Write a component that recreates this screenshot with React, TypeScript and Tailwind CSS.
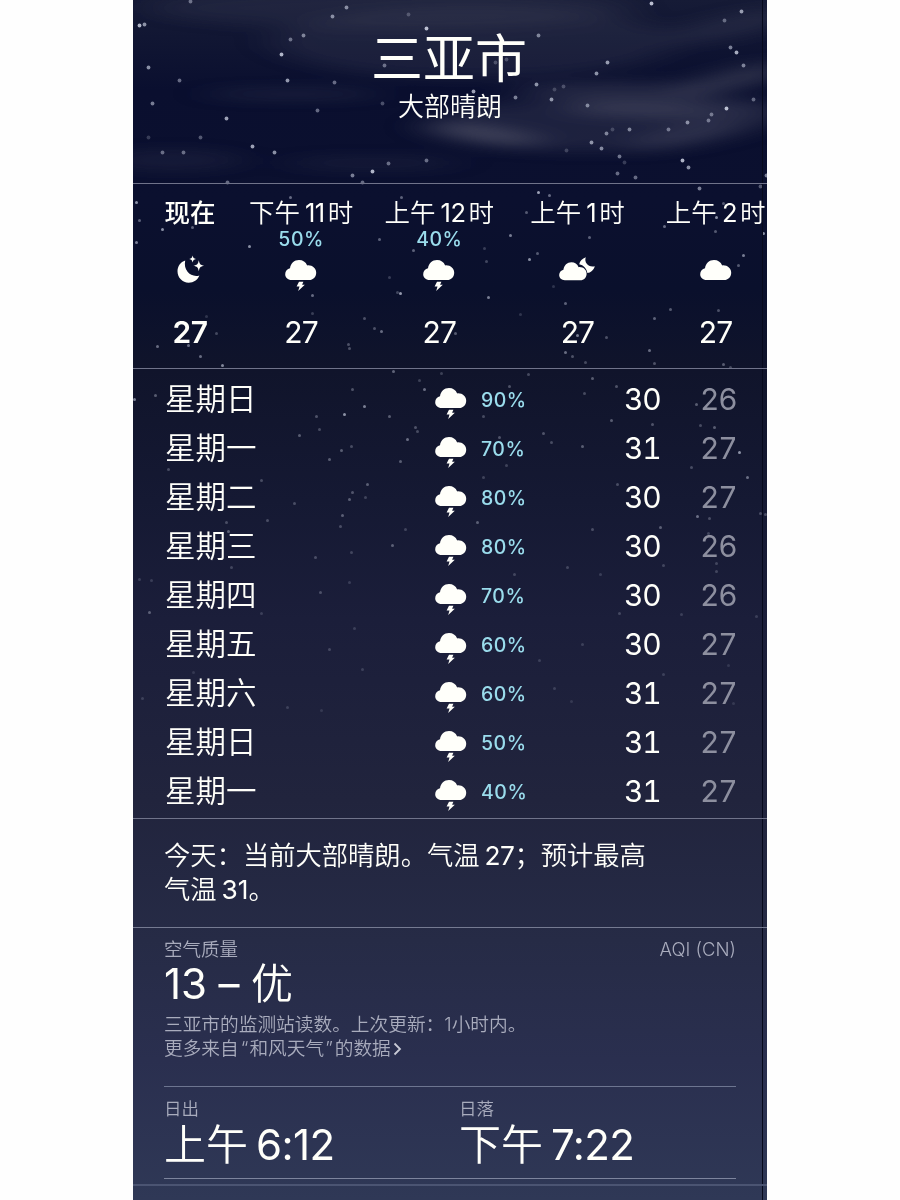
import type { ReactNode } from "react";

// x, y, opacity
const stars = [
  [57, 1, 0.5], [6, 25, 0.9], [11, 24, 0.7], [15, 67, 0.7], [46, 80, 0.5], [19, 103, 0.6], [15, 137, 0.25],
  [29, 152, 0.5], [50, 152, 0.5], [67, 137, 0.4], [93, 118, 0.8], [119, 146, 0.8], [141, 152, 0.7], [148, 54, 0.9],
  [154, 80, 0.75], [157, 39, 0.5], [170, 35, 0.6], [199, 16, 0.65], [213, 7, 0.65], [275, 14, 0.3], [293, 28, 0.95],
  [251, 65, 0.5], [201, 82, 0.5], [184, 110, 0.5], [249, 103, 0.35], [219, 175, 0.6], [229, 182, 0.5],
  [239, 171, 0.9], [255, 163, 0.5], [293, 160, 0.5], [94, 182, 0.5], [518, 3, 0.95], [608, 11, 0.75],
  [591, 20, 0.45], [597, 47, 0.6], [603, 52, 0.85], [610, 65, 0.6], [405, 35, 0.6], [474, 62, 0.75], [463, 73, 0.7],
  [403, 84, 0.7], [340, 91, 0.8], [382, 97, 0.6], [418, 99, 0.7], [421, 89, 0.25], [430, 86, 0.3], [454, 105, 0.6],
  [473, 133, 0.6], [479, 129, 0.25], [496, 129, 0.6], [458, 142, 0.7], [468, 148, 0.65], [486, 156, 0.55],
  [491, 162, 0.25], [484, 173, 0.5], [502, 177, 0.5], [433, 150, 0.25], [535, 129, 0.5], [554, 122, 0.65],
  [575, 120, 0.5], [578, 114, 0.5], [593, 108, 0.95], [620, 99, 0.45], [549, 160, 0.9], [555, 167, 0.7],
  [566, 188, 0.6], [627, 186, 0.4], [633, 175, 0.6], [362, 62, 0.3], [373, 59, 0.3],
  [3, 202, 0.7], [6, 220, 0.45], [29, 229, 0.7], [59, 227, 0.45], [3, 242, 0.6], [116, 246, 0.7], [157, 197, 0.5],
  [268, 197, 0.45], [246, 239, 0.45], [280, 250, 0.45], [256, 277, 0.25], [267, 293, 0.75], [264, 292, 0.3],
  [179, 295, 0.5], [179, 313, 0.25], [231, 318, 0.35], [241, 328, 0.35], [248, 331, 0.5], [215, 344, 0.35],
  [216, 348, 0.35], [24, 346, 0.5], [55, 345, 0.5], [67, 356, 0.5], [89, 365, 0.65], [83, 333, 0.3],
  [73, 316, 0.2], [260, 371, 0.45], [308, 373, 0.25], [405, 192, 0.8], [416, 195, 0.5], [393, 212, 0.4],
  [377, 235, 0.6], [351, 248, 0.25], [353, 261, 0.3], [396, 259, 0.7], [404, 253, 0.4], [456, 237, 0.45],
  [355, 297, 0.6], [420, 286, 0.2], [432, 303, 0.45], [387, 314, 0.2], [322, 333, 0.4], [444, 335, 0.6],
  [473, 337, 0.35], [432, 352, 0.5], [439, 356, 0.35], [452, 362, 0.3], [516, 350, 0.5], [521, 363, 0.35],
  [521, 318, 0.45], [537, 309, 0.4], [585, 310, 0.35], [590, 364, 0.4], [597, 367, 0.3], [582, 231, 0.4],
  [583, 217, 0.7], [590, 203, 0.4], [531, 226, 0.5], [630, 233, 0.7], [610, 255, 0.6], [605, 265, 0.4],
  [395, 374, 0.3], [459, 378, 0.4],
  [1, 399, 0.6], [22, 395, 0.4], [219, 389, 0.35], [231, 406, 0.6], [211, 414, 0.7], [183, 416, 0.35],
  [186, 429, 0.3], [166, 435, 0.4], [256, 416, 0.4], [291, 389, 0.5], [286, 380, 0.25], [282, 427, 0.35],
  [284, 431, 0.3], [274, 439, 0.5], [267, 461, 0.4], [218, 446, 0.3], [208, 450, 0.4], [196, 459, 0.4],
  [35, 469, 0.3], [128, 480, 0.3], [234, 484, 0.4], [219, 492, 0.35], [216, 499, 0.4], [232, 497, 0.25],
  [161, 503, 0.3], [209, 515, 0.4], [207, 526, 0.3], [134, 520, 0.3], [93, 522, 0.3], [95, 531, 0.4],
  [272, 529, 0.25], [259, 545, 0.4], [218, 552, 0.25], [182, 557, 0.3], [98, 567, 0.25], [6, 579, 0.2],
  [18, 580, 0.2], [216, 582, 0.2], [376, 386, 0.35], [451, 393, 0.3], [483, 386, 0.35], [350, 416, 0.3],
  [366, 437, 0.35], [410, 433, 0.35], [418, 442, 0.3], [449, 446, 0.4], [478, 420, 0.4], [519, 424, 0.35],
  [563, 404, 0.4], [567, 425, 0.3], [581, 427, 0.4], [606, 452, 0.7], [558, 467, 0.3], [614, 477, 0.5],
  [373, 465, 0.25], [350, 477, 0.25], [484, 484, 0.3], [344, 522, 0.4], [459, 529, 0.3], [527, 527, 0.4],
  [564, 516, 0.5], [576, 518, 0.3], [575, 533, 0.25], [627, 513, 0.3], [632, 514, 0.3], [434, 567, 0.25],
  [381, 574, 0.25], [467, 574, 0.2], [530, 565, 0.25], [583, 563, 0.25], [583, 571, 0.25],
  [16, 612, 0.4], [128, 613, 0.2], [187, 592, 0.3], [221, 628, 0.2], [196, 649, 0.25], [229, 669, 0.2],
  [154, 707, 0.2], [188, 710, 0.15], [9, 698, 0.2], [60, 672, 0.15], [486, 613, 0.25], [548, 614, 0.2],
  [623, 616, 0.2], [449, 644, 0.2], [406, 660, 0.2], [421, 688, 0.2], [530, 674, 0.2], [438, 701, 0.15],
  [595, 665, 0.15], [600, 703, 0.15],
];

type IconName = "moon" | "storm" | "cloudMoon" | "cloud";

const hours: { half: string; hour: string; chance?: string; icon: IconName; temp: string }[] = [
  { half: "下午", hour: "11", chance: "50%", icon: "storm", temp: "27" },
  { half: "上午", hour: "12", chance: "40%", icon: "storm", temp: "27" },
  { half: "上午", hour: "1", icon: "cloudMoon", temp: "27" },
  { half: "上午", hour: "2", icon: "cloud", temp: "27" },
];

const days = [
  { name: "星期日", chance: "90%", high: 30, low: 26 },
  { name: "星期一", chance: "70%", high: 31, low: 27 },
  { name: "星期二", chance: "80%", high: 30, low: 27 },
  { name: "星期三", chance: "80%", high: 30, low: 26 },
  { name: "星期四", chance: "70%", high: 30, low: 26 },
  { name: "星期五", chance: "60%", high: 30, low: 27 },
  { name: "星期六", chance: "60%", high: 31, low: 27 },
  { name: "星期日", chance: "50%", high: 31, low: 27 },
  { name: "星期一", chance: "40%", high: 31, low: 27 },
];

const cloudPath =
  "M6.6 20C2.9 20 .2 17.4 .2 14.2 .2 11.2 2.3 8.9 5 8.3 5.6 3.4 9.3 0 14 0c3.8 0 6.7 2 8.2 5.4 5-.5 9 2.9 9 7.3 0 4.2-3.1 7.3-7 7.3Z";

function WeatherIcon({ name }: { name: IconName }) {
  if (name === "moon") {
    return (
      <svg width="28" height="28" viewBox="0 0 28 28" fill="currentColor" className="relative left-px -mt-1 overflow-visible">
        <path d="M8.2 4.6C3.6 6 .5 10.4.5 15.3c0 6.4 5 11.4 11.2 11.4 4.9 0 9-2.9 10.7-7.2C14.5 22 6 15 8.2 4.6Z" />
        <path d="M21.8 4.2c.8 4 1.500 4.700 5.400 5.500-3.900.8-4.600 1.500-5.400 5.500-.8-4-1.500-4.700-5.400-5.500 3.900-.8 4.600-1.500 5.400-5.500Z" />
        <path d="M15.6-.6c.6 2.500 1.100 3 3.400 3.500-2.300.5-2.800 1-3.400 3.500-.6-2.500-1.100-3-3.400-3.500 2.300-.5 2.800-1 3.400-3.500Z" />
      </svg>
    );
  }
  if (name === "cloudMoon") {
    return (
      <svg width="36" height="24" viewBox="0 0 36 24" fill="currentColor" className="-mt-[3px]">
        <path transform="translate(0 5.3) scale(.885 .9)" d={cloudPath} />
        <path d="M26.8.2C24.8 5.3 29.5 10.8 35.8 9.2 34.6 13.2 31.6 15.7 28.4 15.9 27.5 11.3 24.6 8 20.2 7.2 20.8 4.2 23.3 1.3 26.8.2Z" />
      </svg>
    );
  }
  return (
    <svg width="32" height="32" viewBox="0 0 32 32" fill="currentColor">
      <path d={cloudPath} />
      {name === "storm" && <path d="M14 21.7h4.4l-1.300 3h2.700l-6.600 6.300 1.300-4.500h-2.900Z" />}
    </svg>
  );
}

function Sky() {
  return (
    <svg className="absolute inset-0" width="634" height="1200" viewBox="0 0 634 1200">
      <defs>
        <filter id="haze" x="-30%" y="-150%" width="160%" height="400%">
          <feGaussianBlur stdDeviation="20 7" />
        </filter>
      </defs>
      <g filter="url(#haze)" fill="#747584">
        <ellipse cx="260" cy="8" rx="240" ry="20" opacity=".12" />
        <ellipse cx="340" cy="42" rx="200" ry="36" opacity=".13" />
        <ellipse cx="160" cy="94" rx="90" ry="4" opacity=".22" />
        <ellipse cx="40" cy="160" rx="70" ry="10" opacity=".12" />
        <ellipse cx="240" cy="163" rx="90" ry="6" opacity=".12" />
        <ellipse cx="480" cy="91" rx="100" ry="8" opacity=".26" />
        <ellipse cx="540" cy="108" rx="110" ry="9" opacity=".3" />
        <ellipse cx="350" cy="134" rx="60" ry="7" opacity=".48" transform="rotate(8 350 134)" />
        <ellipse cx="450" cy="125" rx="150" ry="26" opacity=".18" />
        <ellipse cx="600" cy="80" rx="60" ry="9" opacity=".34" transform="rotate(-14 600 80)" />
        <ellipse cx="570" cy="132" rx="80" ry="9" opacity=".24" transform="rotate(-12 570 132)" />
        <ellipse cx="600" cy="26" rx="70" ry="10" opacity=".18" transform="rotate(-12 600 26)" />
      </g>
      <g fill="#d5daea">
        {stars.map(([x, y, opacity], i) => (
          <circle key={i} cx={x + 0.5} cy={y + 0.5} r={y < 190 ? 1.9 : 1.5} opacity={opacity * 0.9} />
        ))}
      </g>
    </svg>
  );
}

function Hour({ className, children }: { className: string; children: ReactNode }) {
  return <div className={`flex shrink-0 flex-col items-center ${className}`}>{children}</div>;
}

function SunTime({ label, half, time }: { label: string; half: string; time: string }) {
  return (
    <div className="w-[295px] shrink-0">
      <div className="h-[25px] pt-[2px] text-[17.5px] leading-[20px] text-[#a9acbd]">{label}</div>
      <div className="flex gap-[8px] text-[42px] leading-[46px]">
        <span>{half}</span>
        <span className="font-normal tracking-[-0.6px]">{time}</span>
      </div>
    </div>
  );
}

export default function App() {
  return (
    <div className="h-[1200px] w-full overflow-hidden bg-[#fefefe]">
      <main className="relative mx-auto h-[1200px] w-[634px] overflow-hidden bg-[linear-gradient(180deg,#161b36_0px,#0a0f2f_90px,#0b102f_200px,#0a102c_290px,#10142b_370px,#151933_500px,#1b1e3a_620px,#21243d_800px,#262b46_940px,#2a2f4f_1060px,#2f3856_1200px)] font-['Inter','Noto_Sans_CJK_SC',sans-serif] font-[350] text-[#fffffa]">
        <Sky />
        <div className="absolute inset-y-0 left-[629px] w-px bg-[#070a1c]" />

        <div className="relative">
          <header className="flex h-[184px] flex-col items-center border-b border-[#70738a] pt-[30px]">
            <h1 className="-ml-[2px] text-[52px] leading-[60px] font-normal">三亚市</h1>
            <p className="mt-[3px] text-[26px] leading-[28px]">大部晴朗</p>
          </header>

          <section className="flex h-[185px] overflow-hidden border-b border-[#70738a] pt-[15px] pl-[15px]">
            <Hour className="w-[84px] font-medium">
              <span className="h-[30px] text-[25.5px] leading-[28px]">现在</span>
              <span className="h-[31px]" />
              <span className="h-[56px]">
                <WeatherIcon name="moon" />
              </span>
              <span className="text-[30px] leading-[32px] font-semibold tracking-[-0.5px]">27</span>
            </Hour>
            {hours.map((hour) => (
              <Hour key={hour.half + hour.hour} className="w-[138.2px]">
                <span className="flex h-[30px] text-[25.5px] leading-[28px] whitespace-nowrap">
                  <span>{hour.half}</span>
                  <span className="mr-[3px] ml-[5px] font-normal tracking-[-0.5px]">{hour.hour}</span>
                  <span>时</span>
                </span>
                <span className="h-[31px] text-[19.5px] leading-[20px] font-medium tracking-[0.5px] text-[#9adcec]">
                  {hour.chance}
                </span>
                <span className="h-[56px]">
                  <WeatherIcon name={hour.icon} />
                </span>
                <span className="text-[30px] leading-[32px] font-normal tracking-[-0.8px]">{hour.temp}</span>
              </Hour>
            ))}
          </section>

          <section className="h-[450px] border-b border-[#70738a] pt-[6px]">
            {days.map((day, i) => (
              <div key={i} className="flex h-[49px] items-center pl-[32px]">
                <span className="w-[269.5px] pb-[2px] text-[30.5px] leading-[47px]">{day.name}</span>
                <span className="w-[46.5px] pt-[8px]">
                  <WeatherIcon name="storm" />
                </span>
                <span className="w-[143px] text-[19.5px] leading-[28px] font-medium tracking-[0.5px] text-[#9adcec]">
                  {day.chance}
                </span>
                <span className="w-[76px] text-[30px] font-normal tracking-[-1.2px] tabular-nums">{day.high}</span>
                <span className="text-[30px] font-normal tracking-[-1.2px] text-[#8d8f9f] tabular-nums">{day.low}</span>
              </div>
            ))}
          </section>

          <section className="h-[109px] border-b border-[#757a91] pt-[20px] pl-[31px] text-[26.3px] leading-[33.5px] [word-spacing:-2.5px]">
            <p>
              今天：当前大部晴朗。气温 <span className="font-normal tracking-[-0.5px]">27</span>；预计最高
            </p>
            <p>
              气温 <span className="font-normal">31</span>。
            </p>
          </section>

          <section className="mx-[31px] h-[159px] border-b border-[#6d7590] pt-[8px]">
            <div className="flex justify-between text-[18.5px] leading-[26px] text-[#a9acbd]">
              <span>空气质量</span>
              <span>AQI (CN)</span>
            </div>
            <div className="flex gap-[11.5px] text-[42px] leading-[44px]">
              <span className="font-normal">13</span>
              <span className="font-normal">–</span>
              <span>优</span>
            </div>
            <div className="pt-[7px] text-[18.7px] leading-[24px] text-[#a9acbd]">
              <p>三亚市的监测站读数。上次更新：1小时内。</p>
              <p className="flex items-center">
                更多来自<span className="pr-px pl-[2px]">“</span>和风天气<span className="pr-[2px] pl-px">”</span>的数据
                <svg width="9" height="14" viewBox="0 0 9 14" fill="none" stroke="#c9cbd6" strokeWidth="1.8" className="ml-[2px]">
                  <path d="M1.5 1.5 7 7l-5.5 5.5" />
                </svg>
              </p>
            </div>
          </section>

          <section className="mx-[31px] flex h-[92px] border-b border-[#7d849d] pt-[10px]">
            <SunTime label="日出" half="上午" time="6:12" />
            <SunTime label="日落" half="下午" time="7:22" />
          </section>
          <div className="mt-[5px] h-[2px] bg-[#4b5472]" />
        </div>
      </main>
    </div>
  );
}
